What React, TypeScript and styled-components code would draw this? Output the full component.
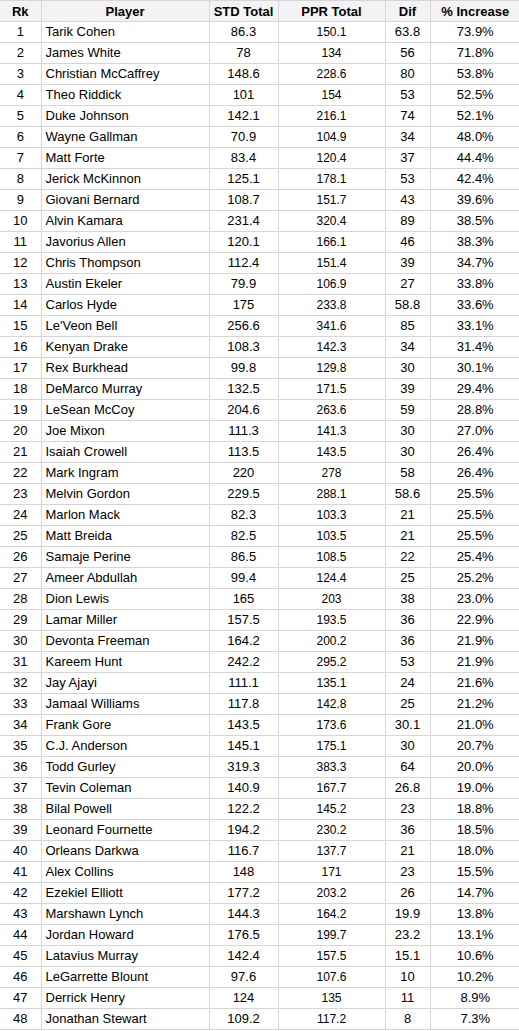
import React from 'react';
import styled, { createGlobalStyle } from 'styled-components';

const GlobalStyle = createGlobalStyle`
  html, body {
    margin: 0;
    padding: 0;
    background: #ffffff;
  }
  body {
    font-family: "Liberation Sans", Arial, sans-serif;
    color: #000000;
  }
`;

type Row = [number, string, string, string, string, string];

const rows: Row[] = [
  [1, 'Tarik Cohen', '86.3', '150.1', '63.8', '73.9%'],
  [2, 'James White', '78', '134', '56', '71.8%'],
  [3, 'Christian McCaffrey', '148.6', '228.6', '80', '53.8%'],
  [4, 'Theo Riddick', '101', '154', '53', '52.5%'],
  [5, 'Duke Johnson', '142.1', '216.1', '74', '52.1%'],
  [6, 'Wayne Gallman', '70.9', '104.9', '34', '48.0%'],
  [7, 'Matt Forte', '83.4', '120.4', '37', '44.4%'],
  [8, 'Jerick McKinnon', '125.1', '178.1', '53', '42.4%'],
  [9, 'Giovani Bernard', '108.7', '151.7', '43', '39.6%'],
  [10, 'Alvin Kamara', '231.4', '320.4', '89', '38.5%'],
  [11, 'Javorius Allen', '120.1', '166.1', '46', '38.3%'],
  [12, 'Chris Thompson', '112.4', '151.4', '39', '34.7%'],
  [13, 'Austin Ekeler', '79.9', '106.9', '27', '33.8%'],
  [14, 'Carlos Hyde', '175', '233.8', '58.8', '33.6%'],
  [15, "Le'Veon Bell", '256.6', '341.6', '85', '33.1%'],
  [16, 'Kenyan Drake', '108.3', '142.3', '34', '31.4%'],
  [17, 'Rex Burkhead', '99.8', '129.8', '30', '30.1%'],
  [18, 'DeMarco Murray', '132.5', '171.5', '39', '29.4%'],
  [19, 'LeSean McCoy', '204.6', '263.6', '59', '28.8%'],
  [20, 'Joe Mixon', '111.3', '141.3', '30', '27.0%'],
  [21, 'Isaiah Crowell', '113.5', '143.5', '30', '26.4%'],
  [22, 'Mark Ingram', '220', '278', '58', '26.4%'],
  [23, 'Melvin Gordon', '229.5', '288.1', '58.6', '25.5%'],
  [24, 'Marlon Mack', '82.3', '103.3', '21', '25.5%'],
  [25, 'Matt Breida', '82.5', '103.5', '21', '25.5%'],
  [26, 'Samaje Perine', '86.5', '108.5', '22', '25.4%'],
  [27, 'Ameer Abdullah', '99.4', '124.4', '25', '25.2%'],
  [28, 'Dion Lewis', '165', '203', '38', '23.0%'],
  [29, 'Lamar Miller', '157.5', '193.5', '36', '22.9%'],
  [30, 'Devonta Freeman', '164.2', '200.2', '36', '21.9%'],
  [31, 'Kareem Hunt', '242.2', '295.2', '53', '21.9%'],
  [32, 'Jay Ajayi', '111.1', '135.1', '24', '21.6%'],
  [33, 'Jamaal Williams', '117.8', '142.8', '25', '21.2%'],
  [34, 'Frank Gore', '143.5', '173.6', '30.1', '21.0%'],
  [35, 'C.J. Anderson', '145.1', '175.1', '30', '20.7%'],
  [36, 'Todd Gurley', '319.3', '383.3', '64', '20.0%'],
  [37, 'Tevin Coleman', '140.9', '167.7', '26.8', '19.0%'],
  [38, 'Bilal Powell', '122.2', '145.2', '23', '18.8%'],
  [39, 'Leonard Fournette', '194.2', '230.2', '36', '18.5%'],
  [40, 'Orleans Darkwa', '116.7', '137.7', '21', '18.0%'],
  [41, 'Alex Collins', '148', '171', '23', '15.5%'],
  [42, 'Ezekiel Elliott', '177.2', '203.2', '26', '14.7%'],
  [43, 'Marshawn Lynch', '144.3', '164.2', '19.9', '13.8%'],
  [44, 'Jordan Howard', '176.5', '199.7', '23.2', '13.1%'],
  [45, 'Latavius Murray', '142.4', '157.5', '15.1', '10.6%'],
  [46, 'LeGarrette Blount', '97.6', '107.6', '10', '10.2%'],
  [47, 'Derrick Henry', '124', '135', '11', '8.9%'],
  [48, 'Jonathan Stewart', '109.2', '117.2', '8', '7.3%'],
];

const Sheet = styled.table`
  border-collapse: collapse;
  table-layout: fixed;
  width: 520px;
  border-top: 1px solid #d6d6d6;
`;

const Col = styled.col<{ $w: number }>`
  width: ${(p) => p.$w}px;
`;

const HeadCell = styled.th`
  height: 20px;
  padding: 0 3px;
  background: #f3f3f3;
  border-right: 1px solid #d6d6d6;
  border-bottom: 1px solid #d6d6d6;
  font-size: 13px;
  font-weight: bold;
  text-align: center;
  white-space: nowrap;
  overflow: hidden;
  &:last-child {
    border-right: none;
  }
`;

const Cell = styled.td<{ $left?: boolean; $small?: boolean }>`
  height: 20px;
  padding: 0 ${(p) => (p.$left ? '4px' : '3px')};
  border-right: 1px solid #d6d6d6;
  border-bottom: 1px solid #d6d6d6;
  font-size: ${(p) => (p.$small ? '12px' : '13px')};
  text-align: ${(p) => (p.$left ? 'left' : 'center')};
  white-space: nowrap;
  overflow: hidden;
  line-height: 20px;
  &:last-child {
    border-right: none;
  }
`;

export default function App() {
  return (
    <>
      <GlobalStyle />
      <Sheet>
        <colgroup>
          <Col $w={41} />
          <Col $w={168} />
          <Col $w={69} />
          <Col $w={107} />
          <Col $w={45} />
          <Col $w={90} />
        </colgroup>
        <thead>
          <tr>
            <HeadCell>Rk</HeadCell>
            <HeadCell>Player</HeadCell>
            <HeadCell>STD Total</HeadCell>
            <HeadCell>PPR Total</HeadCell>
            <HeadCell>Dif</HeadCell>
            <HeadCell>% Increase</HeadCell>
          </tr>
        </thead>
        <tbody>
          {rows.map(([rk, name, std, ppr, dif, pct]) => (
            <tr key={rk}>
              <Cell>{rk}</Cell>
              <Cell $left>{name}</Cell>
              <Cell>{std}</Cell>
              <Cell $small>{ppr}</Cell>
              <Cell>{dif}</Cell>
              <Cell>{pct}</Cell>
            </tr>
          ))}
        </tbody>
      </Sheet>
    </>
  );
}
